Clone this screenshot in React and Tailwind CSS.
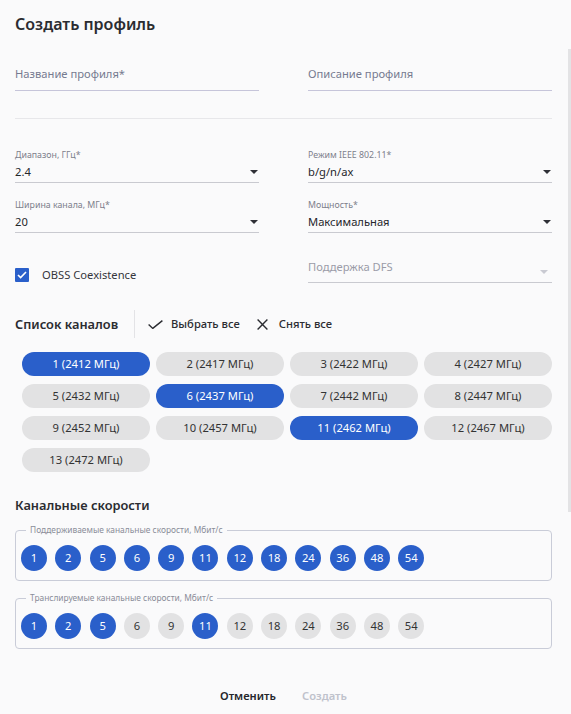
import React, { useState } from 'react'

const channels = [
  { n: 1, f: 2412 }, { n: 2, f: 2417 }, { n: 3, f: 2422 }, { n: 4, f: 2427 },
  { n: 5, f: 2432 }, { n: 6, f: 2437 }, { n: 7, f: 2442 }, { n: 8, f: 2447 },
  { n: 9, f: 2452 }, { n: 10, f: 2457 }, { n: 11, f: 2462 }, { n: 12, f: 2467 },
  { n: 13, f: 2472 },
]

const rates = [1, 2, 5, 6, 9, 11, 12, 18, 24, 36, 48, 54]

const Caret = ({ light }) => (
  <svg width="8" height="4" viewBox="0 0 8 4" className="shrink-0">
    <path d="M0 0h8L4 4z" fill={light ? '#c9cad2' : '#2f3036'} />
  </svg>
)

const Select = ({ label, value }) => (
  <div>
    <div className="text-[8.8px] leading-[14px] text-[#7d808b]">{label}</div>
    <div className="flex h-[21px] items-center justify-between border-b border-[#c9cad0] pr-px">
      <span className="text-[11.2px] leading-[20px] text-[#25262b]">{value}</span>
      <Caret />
    </div>
  </div>
)

const RateGroup = ({ legend, active }) => (
  <fieldset className="rounded-[4px] border border-[#c9ccd8] px-[5px] pb-[9px] pt-[9px]">
    <legend className="ml-[5px] px-[4px] text-[8.4px] leading-[12px] text-[#8a8d99]">{legend}</legend>
    <div className="flex gap-[8.3px]">
      {rates.map((r) => {
        const on = active.includes(r)
        return (
          <div
            key={r}
            className={`flex h-[26px] w-[26px] items-center justify-center rounded-full text-[11.2px] ${
              on ? 'bg-[#2a5fca] text-white' : 'bg-[#e2e2e3] text-[#333]'
            }`}
          >
            {r}
          </div>
        )
      })}
    </div>
  </fieldset>
)

export default function App() {
  const [selected] = useState([1, 6, 11])

  return (
    <div className="relative h-screen overflow-hidden bg-[#fafafb] pl-[15px] pr-[19px] font-['Noto_Sans',sans-serif] text-[#25262b]">
      {/* scroll thumb */}
      <div className="absolute right-0 top-[49px] h-[463px] w-[3px] bg-[#e3e3e5]" />

      <h1 className="pt-[12px] text-[16px] font-semibold leading-[24px] text-[#2b2c31]">Создать профиль</h1>

      {/* name / description */}
      <div className="mt-[24px] grid grid-cols-2 gap-x-[49px]">
        <div className="h-[31px] border-b border-[#c6c5da] pt-[4px] text-[11.2px] leading-[20px] text-[#767a90]">
          Название профиля*
        </div>
        <div className="h-[31px] border-b border-[#c6c5da] pt-[4px] text-[11.2px] leading-[20px] text-[#767a90]">
          Описание профиля
        </div>
      </div>

      <div className="mt-[27px] border-t border-[#e7e7ea]" />

      {/* selects */}
      <div className="mt-[29px] grid grid-cols-2 gap-x-[49px] gap-y-[15px]">
        <Select label="Диапазон, ГГц*" value="2.4" />
        <Select label="Режим IEEE 802.11*" value="b/g/n/ax" />
        <Select label="Ширина канала, МГц*" value="20" />
        <Select label="Мощность*" value="Максимальная" />
      </div>

      <div className="mt-[25px] grid grid-cols-2 gap-x-[49px]">
        <div className="flex items-center gap-[13px] pt-[9px]">
          <span className="flex h-[14px] w-[14px] items-center justify-center rounded-[1px] bg-[#2a5fca]">
            <svg width="10" height="8" viewBox="0 0 10 8">
              <path d="M1 4l2.6 2.6L9 1" fill="none" stroke="#fff" strokeWidth="1.6" />
            </svg>
          </span>
          <span className="text-[11.2px] leading-[16px] text-[#35363c]">OBSS Coexistence</span>
        </div>
        <div className="flex h-[25px] justify-between border-b border-[#c9cad0] pr-[4px]">
          <span className="text-[11.2px] leading-[18px] text-[#9b9ca8]">Поддержка DFS</span>
          <span className="pt-[12px]">
            <Caret light />
          </span>
        </div>
      </div>

      {/* channel list header */}
      <div className="mt-[27px] flex h-[28px] items-center">
        <span className="w-[119px] text-[12.8px] font-semibold leading-[20px] text-[#2b2c31]">Список каналов</span>
        <span className="h-[28px] w-px bg-[#e3e3e6]" />
        <button className="ml-[13px] flex items-center gap-[8px] text-[11.2px] font-medium text-[#2b2c31]">
          <svg width="15" height="9" viewBox="0 0 15 9" className="mt-[1px]">
            <path d="M0.6 4.4L4.8 8.4L14.4 0.6" fill="none" stroke="#2b2c31" strokeWidth="1.4" />
          </svg>
          Выбрать все
        </button>
        <button className="ml-[17px] flex items-center gap-[11px] text-[11.2px] font-medium text-[#2b2c31]">
          <svg width="11" height="11" viewBox="0 0 11 11" className="mt-[1px]">
            <path d="M0.6 0.6L10.4 10.4M10.4 0.6L0.6 10.4" fill="none" stroke="#2b2c31" strokeWidth="1.4" />
          </svg>
          Снять все
        </button>
      </div>

      <div className="ml-[7px] mt-[14px] grid grid-cols-4 gap-x-[6px] gap-y-[8px]">
        {channels.map((c) => {
          const on = selected.includes(c.n)
          return (
            <div
              key={c.n}
              className={`flex h-[24px] items-center justify-center rounded-full text-[11.2px] ${
                on ? 'bg-[#2a5fca] text-white' : 'bg-[#e2e2e3] text-[#333]'
              }`}
            >
              {c.n} ({c.f} МГц)
            </div>
          )
        })}
      </div>

      <div className="mt-[23px] text-[12.8px] font-semibold leading-[20px] text-[#2b2c31]">Канальные скорости</div>

      <div className="mt-[9px]">
        <RateGroup legend="Поддерживаемые канальные скорости, Мбит/с" active={rates} />
      </div>
      <div className="mt-[11px]">
        <RateGroup legend="Транслируемые канальные скорости, Мбит/с" active={[1, 2, 5, 11]} />
      </div>

      <div className="mt-[37px] flex justify-center gap-[26px] text-[11.2px] font-semibold leading-[20px]">
        <button className="text-[#25262b]">Отменить</button>
        <button className="text-[#bfc2cc]">Создать</button>
      </div>
    </div>
  )
}
